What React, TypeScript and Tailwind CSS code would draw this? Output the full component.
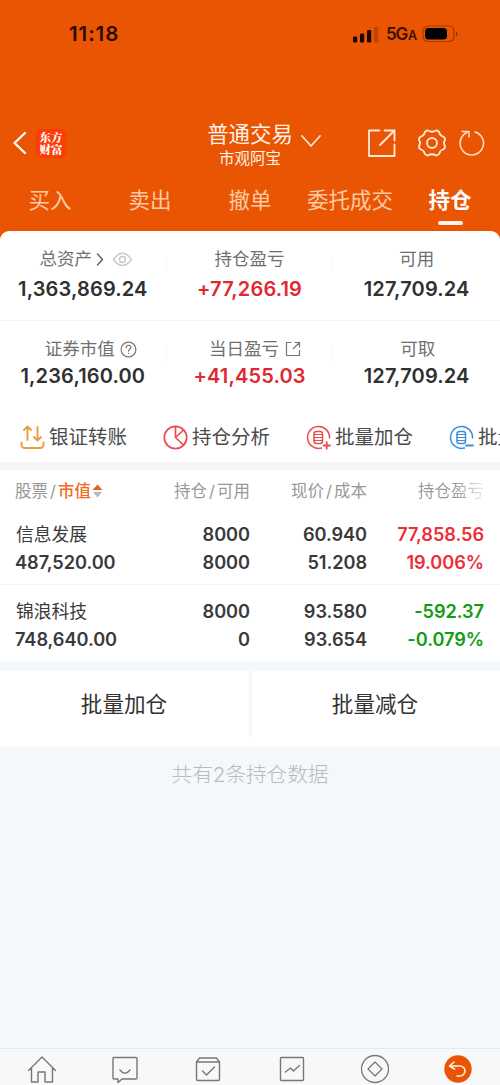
import type { ReactNode } from "react";

const svgBase = { fill: "none", strokeLinecap: "round", strokeLinejoin: "round" } as const;

function StatusBar() {
  return (
    <div className="flex h-[68px] items-center pl-[69px] pr-[41px]">
      <span className="text-[20.5px] leading-none font-semibold tracking-[0.9px] text-[#2b0b00]">11:18</span>
      <svg className="ml-auto" width="27" height="17" viewBox="0 0 27 17">
        <rect x="1" y="10.5" width="4.2" height="6" rx="1.2" fill="#1c0600" />
        <rect x="8" y="7.5" width="4.2" height="9" rx="1.2" fill="#1c0600" />
        <rect x="15" y="4" width="4.2" height="12.5" rx="1.2" fill="#1c0600" />
        <rect x="22" y="1" width="4.2" height="15.5" rx="1.2" fill="#bd4500" />
      </svg>
      <span className="ml-[7px] w-[29px] text-[17px] leading-none font-semibold whitespace-nowrap tracking-[-1.2px] text-[#3a1000]">
        5G<span className="ml-[1px] text-[12.5px]">A</span>
      </span>
      <svg className="ml-[7px]" width="37" height="18" viewBox="0 0 37 18">
        <rect x="1" y="1" width="31" height="15.5" rx="5" fill="none" stroke="#a53c00" strokeWidth="1.2" />
        <rect x="3" y="3" width="22" height="11.5" rx="3.5" fill="#000" />
        <path d="M34 6.5v4.500c2-.6 2-4 0-4.500z" fill="#8b3200" />
      </svg>
    </div>
  );
}

function Header() {
  return (
    <div className="flex h-[66px] items-center pt-[8px]">
      <svg className="ml-3" width="16" height="24" viewBox="0 0 16 24" {...svgBase} stroke="#fff" strokeWidth="2.3">
        <path d="M13 2 2.500 12 13 22" />
      </svg>
      <div className="ml-2 flex h-[29px] w-[30px] flex-col items-center justify-center rounded-[5px] bg-[#ff3c08] font-['Noto_Serif_CJK_SC','Noto_Sans_CJK_SC',serif] text-[11.5px] leading-[12.5px] font-black text-white">
        <span>东方</span>
        <span>财富</span>
      </div>
      <div className="ml-[140px] flex w-[88px] flex-col items-center pt-[4px] whitespace-nowrap text-[#fff3ea]">
        <span className="text-[21.400px] leading-[27px]">普通交易</span>
        <span className="text-[15.500px] leading-[22px]">市观阿宝</span>
      </div>
      <svg className="ml-[6px]" width="22" height="16" viewBox="0 0 22 16" {...svgBase} stroke="#ffeadc" strokeWidth="1.700">
        <path d="M2 1 11 11 20 1" />
      </svg>
      <svg className="ml-[45px]" width="30" height="30" viewBox="0 0 30 30" {...svgBase} stroke="#ffeadc" strokeWidth="1.800">
        <path d="M12.500 2.500H2V28h25.500V16.500M17.500 2.500h10V12.500M27.500 2.500 13 17" />
      </svg>
      <svg className="ml-[20px]" width="30" height="30" viewBox="0 0 30 30" {...svgBase} stroke="#ffeadc" strokeWidth="1.800">
        <path d="M11 2.500Q15 5 19 2.500Q21.500 2.500 22.500 5Q23 7.500 26 8.500Q29 10 27.500 13Q26.500 15 27.500 17Q29 20 26 21.500Q23 22.500 22.500 25Q21.500 27.500 19 27.500Q15 25 11 27.500Q8.500 27.500 7.500 25Q7 22.500 4 21.500Q1 20 2.500 17Q3.500 15 2.500 13Q1 10 4 8.500Q7 7.500 7.500 5Q8.500 2.500 11 2.500Z" />
        <circle cx="15" cy="15" r="5" />
      </svg>
      <svg className="ml-[11px]" width="28" height="28" viewBox="0 0 28 28" {...svgBase} stroke="#ffdcc2" strokeWidth="1.600">
        <path d="M17 3A11.700 11.700 0 1 1 9 3.600M4 2.500h7V8" />
      </svg>
    </div>
  );
}

function Tabs() {
  return (
    <div className="grid h-[59px] grid-cols-5 text-center text-[21.500px] leading-[57px] whitespace-nowrap text-[#ffc9a5]">
      <span>买入</span>
      <span>卖出</span>
      <span>撤单</span>
      <span>委托成交</span>
      <span className="flex flex-col items-center font-bold text-white">
        持仓
        <i className="-mt-[8px] block h-[4px] w-[25px] shrink-0 rounded-full bg-[#fff3ec]" />
      </span>
    </div>
  );
}

function Stat({ label, value, red, icon, divider, lower, shift = "" }: { label: string; value: string; red?: boolean; icon?: ReactNode; divider?: boolean; lower?: boolean; shift?: string }) {
  return (
    <div className="flex">
      <div className="flex flex-1 flex-col items-center pt-[16px]">
        <div className={"flex h-[24px] items-center text-[17.500px] whitespace-nowrap text-[#707070] " + shift}>
          {label}
          {icon}
        </div>
        <div className={(lower ? "mt-[2px]" : "mt-[5px]") + (red ? " text-[#df2931]" : " text-[#303030]") + " text-[20px] leading-[26px] font-semibold tracking-[0.15px]"}>
          {value}
        </div>
      </div>
      {divider && <div className="mt-[25px] h-[15px] w-px bg-[#f6f7f8]" />}
    </div>
  );
}

function Summary() {
  return (
    <div className="rounded-t-[9px] bg-white">
      <div className="grid h-[90px] grid-cols-3 border-b border-[#f6f6f6]">
        <Stat
          label="总资产"
          value="1,363,869.24"
          divider
          shift="pl-[6px]"
          icon={
            <svg className="ml-[3px]" width="37" height="16" viewBox="0 0 37 16" {...svgBase}>
              <path d="m2.500 3 5 5.500-5 5.500" stroke="#666" strokeWidth="1.500" />
              <path d="M18.500 8.500q9-12.500 18 0q-9 12-18 0Z" stroke="#c6c8c9" strokeWidth="1.400" />
              <circle cx="27.500" cy="8.500" r="3" stroke="#c6c8c9" strokeWidth="1.400" />
            </svg>
          }
        />
        <Stat label="持仓盈亏" value="+77,266.19" red divider />
        <Stat label="可用" value="127,709.24" />
      </div>
      <div className="grid h-[85px] grid-cols-3">
        <Stat
          lower
          label="证券市值"
          value="1,236,160.00"
          divider
          shift="pl-[16px]"
          icon={
            <svg className="ml-[5px]" width="17" height="17" viewBox="0 0 17 17" {...svgBase} stroke="#777" strokeWidth="1.200">
              <circle cx="8.500" cy="8.500" r="7.400" />
              <path d="M6.100 6.700c0-3.300 5-3.100 4.800-.1-.1 1.700-2.400 1.700-2.400 3.500M8.500 12.300v.2" />
            </svg>
          }
        />
        <Stat
          lower
          label="当日盈亏"
          value="+41,455.03"
          red
          divider
          shift="pl-[11px]"
          icon={
            <svg className="ml-[6px]" width="16" height="16" viewBox="0 0 16 16" {...svgBase} stroke="#777" strokeWidth="1.200">
              <path d="M6 1.500H1.500v13h13V9.500M10 1.500h4.500V6M14.500 1.500 8.500 7.500" />
            </svg>
          }
        />
        <Stat lower label="可取" value="127,709.24" shift="pl-[2px]" />
      </div>
    </div>
  );
}

function BatchIcon({ plus }: { plus?: boolean }) {
  return (
    <svg width="25" height="25" viewBox="0 0 25 25" {...svgBase} stroke={plus ? "#e94b47" : "#3d8fdc"} strokeWidth="1.500">
      <path d="M23.500 13A11 11 0 1 0 15.500 23" />
      <rect x="8" y="6.500" width="8.500" height="12" rx="2.500" />
      <path d="M8 9.500h8.500M8 12.500h8.500M8 15.500h8.500" strokeWidth="1.200" />
      <path d={plus ? "M17.500 20.500h6.500M20.700 17.200v6.500" : "M17 20.500h7"} strokeWidth="1.800" />
    </svg>
  );
}

function Actions() {
  return (
    <div className="flex h-[56px] items-center overflow-hidden bg-white pt-[6px] pl-5 text-[19.500px] whitespace-nowrap text-[#4b4b4b]">
      <div className="flex w-[143px] shrink-0 items-center gap-[4px]">
        <svg width="25" height="25" viewBox="0 0 25 25" {...svgBase} stroke="#e5a03c" strokeWidth="1.900">
          <path d="M1.500 17.500v2q0 3.500 3.500 3.500h15q3.500 0 3.500-3.500v-2M7.500 15V2M4 5l3.500-3.500L11 5M17.500 2v13M14 12l3.500 3.500L21 12" />
        </svg>
        <span className="pt-[2px]">银证转账</span>
      </div>
      <div className="flex w-[143px] shrink-0 items-center gap-[4px]">
        <svg width="25" height="25" viewBox="0 0 25 25" {...svgBase} stroke="#e94b50" strokeWidth="1.700">
          <circle cx="12.500" cy="12.500" r="11.200" />
          <path d="M12.500 1.500v11l8 7.500M12.500 12.500l8-7.500" />
        </svg>
        <span className="pt-[2px]">持仓分析</span>
      </div>
      <div className="flex w-[143px] shrink-0 items-center gap-[4px]"><BatchIcon plus /><span className="pt-[2px]">批量加仓</span></div>
      <div className="flex w-[143px] shrink-0 items-center gap-[4px]"><BatchIcon /><span className="pt-[2px]">批量减仓</span></div>
    </div>
  );
}

const holdings = [
  { name: "信息发展", worth: "487,520.00", held: "8000", free: "8000", price: "60.940", cost: "51.208", gain: "77,858.56", rate: "19.006%", up: true },
  { name: "锦浪科技", worth: "748,640.00", held: "8000", free: "0", price: "93.580", cost: "93.654", gain: "-592.37", rate: "-0.079%", up: false },
];

function Holdings() {
  return (
    <div className="bg-white">
      <div className="grid h-[40px] grid-cols-[135px_100px_117px_117px] items-center pt-[2px] pl-[15px] text-right text-[16.500px] whitespace-nowrap text-[#999]">
        <div className="flex items-center text-left">
          股票<span className="mx-[2px]">/</span><span className="font-medium text-[#f06a25]">市值</span>
          <svg className="ml-px" width="11" height="14" viewBox="0 0 11 14">
            <path d="M5.500.500 10.500 6H.500z" fill="#e9631f" />
            <path d="M5.500 13.500 10 8H1z" fill="#b9bcbe" />
          </svg>
        </div>
        <span>持仓<span className="mx-[2px]">/</span>可用</span>
        <span>现价<span className="mx-[2px]">/</span>成本</span>
        <span className="bg-linear-to-r from-[#999] from-75% to-[#eee] bg-clip-text text-transparent">持仓盈亏</span>
      </div>
      {holdings.map((h) => (
        <div key={h.name} className="grid h-[75px] grid-cols-[135px_100px_117px_117px] border-b border-[#f5f5f5] pt-[10px] pl-[15px] text-right text-[18.200px] leading-[28px] font-semibold tracking-[-0.06px] whitespace-nowrap text-[#3a3a3a] last:h-[76px] last:border-b-0 last:pt-[12px]">
          <div className="text-left">
            <div className="pl-px text-[17.800px] leading-[30px] font-normal tracking-normal">{h.name}</div>
            <div className="-mt-[2px]">{h.worth}</div>
          </div>
          <div><div>{h.held}</div><div>{h.free}</div></div>
          <div><div>{h.price}</div><div>{h.cost}</div></div>
          <div className={h.up ? "text-[#eb3038]" : "text-[#129c12]"}><div>{h.gain}</div><div>{h.rate}</div></div>
        </div>
      ))}
    </div>
  );
}

function BottomNav() {
  return (
    <nav className="grid h-[37px] grid-cols-6 items-start justify-items-center overflow-hidden border-t border-[#e6e8eb] bg-[#f7f8fa] pt-[5px]">
      <svg width="30" height="30" viewBox="0 0 30 30" {...svgBase} stroke="#777" strokeWidth="1.400">
        <path d="M1.500 16.500 15 3l13.500 13.500M4.500 14V28h6.500V18h7v10H25.500V14" />
      </svg>
      <svg width="30" height="30" viewBox="0 0 30 30" {...svgBase} stroke="#777" strokeWidth="1.400">
        <path d="M4 3.500h22q1 0 1 1V24q0 1-1 1H12l-4 3.500V25H4q-1 0-1-1V4.500q0-1 1-1ZM10 16q5 6.500 10 0" />
      </svg>
      <svg width="30" height="30" viewBox="0 0 30 30" {...svgBase} stroke="#777" strokeWidth="1.400">
        <path d="M3.500 8v17q0 1.500 1.500 1.500h20q1.500 0 1.500-1.500V8ZM3.500 8l3-4h17l3 4M9.500 17l4 4 8-8" />
      </svg>
      <svg width="30" height="30" viewBox="0 0 30 30" {...svgBase} stroke="#777" strokeWidth="1.400">
        <rect x="3.500" y="3.500" width="23" height="23" rx="1" />
        <path d="m8.500 18 5-4 3 3 6-5.500" />
      </svg>
      <svg width="30" height="30" viewBox="0 0 30 30" {...svgBase} stroke="#777" strokeWidth="1.300">
        <circle cx="15" cy="15" r="13.500" />
        <path d="M15 8 22 15 15 22 8 15Z" />
      </svg>
      <svg width="30" height="30" viewBox="0 0 30 30" {...svgBase} stroke="#fff0e7" strokeWidth="1.600">
        <circle cx="15" cy="15" r="13.700" fill="#e95504" stroke="none" />
        <path d="m11 8-4.500 4 5 3M6.500 12h10.500a5 5 0 0 1 0 10H14" />
      </svg>
    </nav>
  );
}

export default function App() {
  return (
    <div className="flex h-[1085px] w-[500px] flex-col overflow-hidden bg-[#f4f8fa] font-['Inter','Noto_Sans_CJK_SC',sans-serif]">
      <header className="h-[240px] shrink-0 bg-[#e95502]">
        <StatusBar />
        <div className="h-[38px]" />
        <Header />
        <Tabs />
      </header>
      <div className="-mt-[9px] shrink-0"><Summary /></div>
      <Actions />
      <div className="h-[8px] shrink-0 bg-[#f3f7f8]" />
      <Holdings />
      <div className="mt-[10px] grid h-[76px] shrink-0 grid-cols-2 bg-white text-center text-[21.600px] leading-[66px] text-[#333]">
        <span className="pr-[2px]">批量加仓</span>
        <span className="relative before:absolute before:top-0 before:left-[-1px] before:h-[66px] before:w-[3px] before:bg-[#f4f8fa]">批量减仓</span>
      </div>
      <p className="mt-[12px] text-center text-[20.600px] leading-[31px] font-light text-[#b6bbbd]">共有2条持仓数据</p>
      <div className="mt-auto"><BottomNav /></div>
    </div>
  );
}
